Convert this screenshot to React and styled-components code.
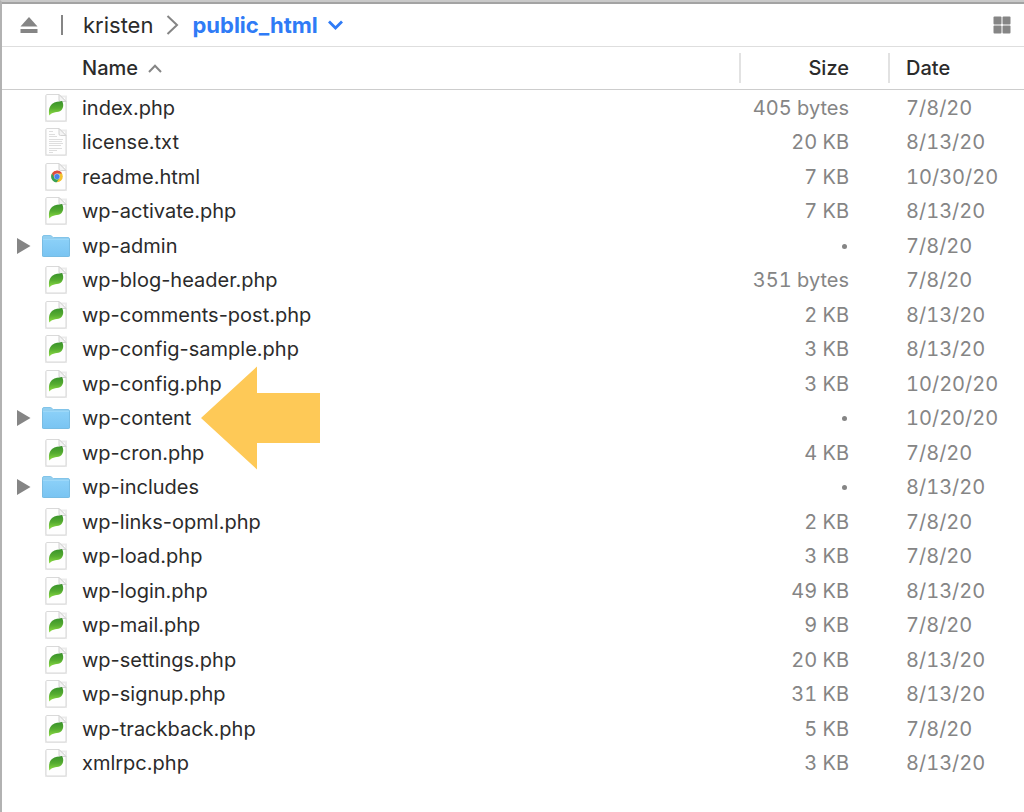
import React from "react";
import styled, { createGlobalStyle } from "styled-components";

const GlobalStyle = createGlobalStyle`
  * {
    box-sizing: border-box;
  }
  body {
    margin: 0;
    background: #ffffff;
    font-family: Inter, "Liberation Sans", sans-serif;
    font-size: 20px;
    line-height: 24px;
    color: #2b2b2b;
  }
  button {
    padding: 0;
    border: 0;
    background: none;
    font: inherit;
    color: inherit;
  }
  svg {
    display: block;
  }
`;

const Browser = styled.main`
  min-height: 100vh;
  overflow: hidden;
  border-top: 2px solid #c9c9c9;
  border-left: 2px solid #b2b2b2;
`;

const PathBar = styled.header`
  display: flex;
  align-items: center;
  height: 45px;
  padding: 0 13px 0 18px;
  border-top: 2px solid #a3a3a3;
  border-bottom: 1px solid #dedede;
  font-size: 22px;
`;

const PathDivider = styled.span`
  width: 2px;
  height: 20px;
  margin: 0 20px 0 23px;
  background: #858585;
`;

const Breadcrumb = styled.nav`
  display: flex;
  flex: 1;
  align-items: center;
  gap: 13px;
`;

const PathLink = styled.a`
  color: #2b2b2b;
  text-decoration: none;
`;

const CurrentFolder = styled.button`
  display: flex;
  align-items: center;
  gap: 10px;
  color: #2f7bf6;
  font-weight: 700;
`;

const FileTable = styled.table`
  width: 100%;
  table-layout: fixed;
  border-collapse: separate;
  border-spacing: 0;
`;

const HeadCell = styled.th`
  width: ${prop => prop.width || "auto"};
  height: 43px;
  padding: 6px 0;
  border-bottom: 1px solid #cdcdcd;
  font-weight: 500;
`;

const HeadLabel = styled.div`
  display: flex;
  align-items: center;
  justify-content: ${prop => (prop.end ? "flex-end" : "flex-start")};
  gap: 10px;
  height: 30px;
  padding: ${prop => prop.pad};
  border-left: ${prop => (prop.divided ? "2px solid #e2e2e2" : "0")};
`;

const FileRow = styled.tr`
  height: 35px;
  &:nth-child(even) {
    height: 34px;
  }
`;

const Cell = styled.td`
  padding: ${prop => prop.pad || "0"};
  color: #858585;
  font-variant-numeric: tabular-nums;
  text-align: ${prop => prop.align || "left"};
`;

const FileName = styled.div`
  display: grid;
  grid-template-columns: 15px 28px auto;
  align-items: center;
  justify-content: start;
  column-gap: 11px;
  padding-left: 14px;
  color: #2b2b2b;
  font-variant-numeric: normal;
`;

const Toggle = styled.button`
  grid-column: 1;
`;

const IconBox = styled.span`
  grid-column: 2;
  display: flex;
  justify-content: center;
`;

const Label = styled.span`
  grid-column: 3;
  position: relative;
  padding-left: 1px;
`;

const Pointer = styled.svg`
  position: absolute;
  top: 50%;
  left: 100%;
  margin-left: 10px;
  transform: translateY(-50%);
`;

const Dot = styled.span`
  display: inline-block;
  width: 5px;
  height: 5px;
  margin: 0 2px 2px 0;
  border-radius: 50%;
  background: #858585;
  vertical-align: middle;
`;

const files = [
  ["index.php", "405 bytes", "7/8/20"],
  ["license.txt", "20 KB", "8/13/20"],
  ["readme.html", "7 KB", "10/30/20"],
  ["wp-activate.php", "7 KB", "8/13/20"],
  ["wp-admin", null, "7/8/20"],
  ["wp-blog-header.php", "351 bytes", "7/8/20"],
  ["wp-comments-post.php", "2 KB", "8/13/20"],
  ["wp-config-sample.php", "3 KB", "8/13/20"],
  ["wp-config.php", "3 KB", "10/20/20"],
  ["wp-content", null, "10/20/20"],
  ["wp-cron.php", "4 KB", "7/8/20"],
  ["wp-includes", null, "8/13/20"],
  ["wp-links-opml.php", "2 KB", "7/8/20"],
  ["wp-load.php", "3 KB", "7/8/20"],
  ["wp-login.php", "49 KB", "8/13/20"],
  ["wp-mail.php", "9 KB", "7/8/20"],
  ["wp-settings.php", "20 KB", "8/13/20"],
  ["wp-signup.php", "31 KB", "8/13/20"],
  ["wp-trackback.php", "5 KB", "7/8/20"],
  ["xmlrpc.php", "3 KB", "8/13/20"]
];

// shared gradients, referenced by every row icon
const IconDefs = () => (
  <svg width="0" height="0" style={{ position: "absolute" }} aria-hidden="true">
    <defs>
      <linearGradient id="leaf" x1="0" y1="0" x2="0" y2="1">
        <stop offset="0" stopColor="#37912a" />
        <stop offset="0.5" stopColor="#56ac30" />
        <stop offset="1" stopColor="#8fe045" />
      </linearGradient>
      <linearGradient id="folder" x1="0" y1="0" x2="0" y2="1">
        <stop offset="0" stopColor="#8bd0f8" />
        <stop offset="1" stopColor="#79c4f2" />
      </linearGradient>
    </defs>
  </svg>
);

const Page = ({ children }) => (
  <svg width="24" height="30" viewBox="0 0 24 30" aria-hidden="true">
    <path d="M2 3.500h20v24.500h-20z" fill="none" stroke="#000" strokeOpacity="0.08" strokeWidth="2" />
    <path d="M3 1.500h12l7 7v18.500a1 1 0 0 1-1 1h-18a1 1 0 0 1-1-1v-24.500a1 1 0 0 1 1-1z" fill="#fefefe" stroke="#d9d9d9" />
    <path d="M15 1.500l7 7h-5.500a1.500 1.500 0 0 1-1.500-1.500z" fill="#f4f4f4" stroke="#d2d2d2" />
    {children}
  </svg>
);

const PhpIcon = () => (
  <Page>
    <path
      d="M5.300 22.500C4.600 18.500 4.800 13.800 8 11C11 8.500 15 8.800 18 8C19.700 10.500 19.800 14.800 17.300 17.200C14 20.300 8.500 17.900 5.300 22.500z"
      fill="url(#leaf)"
    />
  </Page>
);

const TextIcon = () => (
  <Page>
    <path
      d="M5 4.500h4M5 7.500h6M5 9.500h8M5 12.500h14M5 14.500h13M5 16.500h14M5 18.500h12M5 21.500h13M5 23.500h8M5 25.500h4"
      stroke="#dedede"
    />
  </Page>
);

const HtmlIcon = () => (
  <Page>
    <circle cx="13" cy="14.500" r="5.800" fill="#f3c32f" />
    <path d="M8 11.500A5.800 5.800 0 0 1 18.100 11.600H13L10.500 16z" fill="#dd4b3e" />
    <path d="M8 11.500A5.800 5.800 0 0 0 12.700 20.300L15.500 16L10.500 16z" fill="#35a158" />
    <circle cx="13" cy="14.500" r="3" fill="#c9dbfa" />
    <circle cx="13" cy="14.500" r="2.600" fill="#4683ea" />
  </Page>
);

const FolderIcon = () => (
  <svg width="28" height="24" viewBox="0 0 28 24" aria-hidden="true">
    <path d="M0.500 3a1.500 1.500 0 0 1 1.500-1.500h6.500c1.500 0 1.500 2 3 2h14.500a1.500 1.500 0 0 1 1.500 1.500v17h-27z" fill="#93cff0" stroke="#82c4e9" />
    <path d="M0.500 5.500h27v16a1 1 0 0 1-1 1h-25a1 1 0 0 1-1-1z" fill="url(#folder)" stroke="#78bce3" />
    <path d="M1 5.500h26" stroke="#9cd8f9" />
  </svg>
);

const FileIcon = ({ name }) => {
  if (name.endsWith(".php")) return <PhpIcon />;
  if (name.endsWith(".txt")) return <TextIcon />;
  if (name.endsWith(".html")) return <HtmlIcon />;
  return <FolderIcon />;
};

const App = () => {
  return (
    <Browser>
      <GlobalStyle />
      <IconDefs />
      <PathBar>
        <button aria-label="Eject">
          <svg width="18" height="18" viewBox="0 0 18 18" fill="#858585">
            <path d="M9 1L17.500 10.500H0.500z" />
            <path d="M0.500 13h17v4h-17z" />
          </svg>
        </button>
        <PathDivider />
        <Breadcrumb aria-label="Path">
          <PathLink href="#kristen">kristen</PathLink>
          <svg width="13" height="20" viewBox="0 0 13 20" fill="none" stroke="#858585" strokeWidth="2">
            <path d="M1.500 1L11 10L1.500 19" />
          </svg>
          <CurrentFolder>
            public_html
            <svg width="15" height="10" viewBox="0 0 15 10" fill="none" stroke="#2f7bf6" strokeWidth="2.800">
              <path d="M1 1.500L7.500 8L14 1.500" />
            </svg>
          </CurrentFolder>
        </Breadcrumb>
        <button aria-label="Grid view">
          <svg width="18" height="18" viewBox="0 0 18 18" fill="#858585">
            <rect x="0.500" y="0.500" width="8" height="8" rx="1" />
            <rect x="9.500" y="0.500" width="8" height="8" rx="1" />
            <rect x="0.500" y="9.500" width="8" height="8" rx="1" />
            <rect x="9.500" y="9.500" width="8" height="8" rx="1" />
          </svg>
        </button>
      </PathBar>
      <FileTable>
        <thead>
          <tr>
            <HeadCell>
              <HeadLabel pad="0 0 0 80px">
                Name
                <svg width="14" height="9" viewBox="0 0 14 9" fill="none" stroke="#858585" strokeWidth="2">
                  <path d="M1 8L7 1.800L13 8" />
                </svg>
              </HeadLabel>
            </HeadCell>
            <HeadCell width="149px">
              <HeadLabel divided end pad="0 39px 0 0">
                Size
              </HeadLabel>
            </HeadCell>
            <HeadCell width="136px">
              <HeadLabel divided pad="0 0 0 16px">
                Date
              </HeadLabel>
            </HeadCell>
          </tr>
        </thead>
        <tbody>
          {files.map(([name, size, date]) => (
            <FileRow key={name}>
              <Cell>
                <FileName>
                  {!size && (
                    <Toggle aria-label={`Expand ${name}`}>
                      <svg width="15" height="16" viewBox="0 0 15 16">
                        <path d="M1 0L14.500 8L1 16z" fill="#858585" />
                      </svg>
                    </Toggle>
                  )}
                  <IconBox>
                    <FileIcon name={name} />
                  </IconBox>
                  <Label>
                    {name}
                    {name === "wp-content" && (
                      <Pointer width="119" height="104" viewBox="0 0 119 104" aria-hidden="true">
                        <path d="M0 52L56 0.500V27H119V77H56V103.500z" fill="#fec957" />
                      </Pointer>
                    )}
                  </Label>
                </FileName>
              </Cell>
              <Cell align="right" pad="0 39px 0 0">
                {size || <Dot />}
              </Cell>
              <Cell pad="0 0 0 18px">{date}</Cell>
            </FileRow>
          ))}
        </tbody>
      </FileTable>
    </Browser>
  );
};

export default App;
